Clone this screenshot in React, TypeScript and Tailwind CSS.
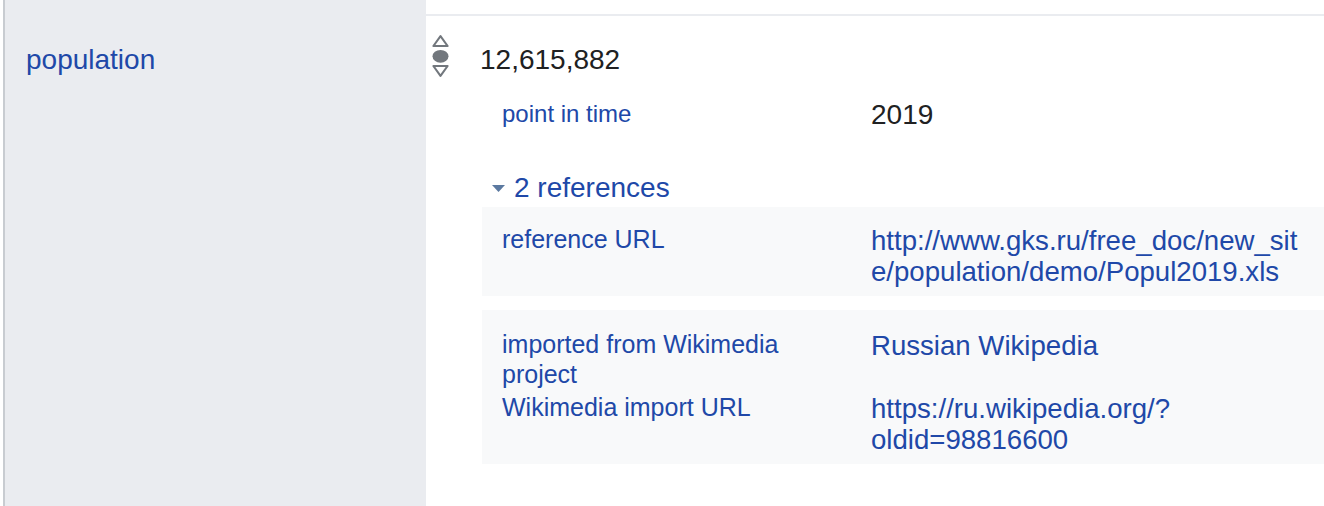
import React from "react";

const LINK = "text-[#2048a8]";

function RankIcon() {
  return (
    <svg width="17" height="42" viewBox="0 0 17 42" className="block">
      <polygon points="8.5,1.2 15.6,11 1.4,11" fill="none" stroke="#72777d" strokeWidth="2.1" strokeLinejoin="round" />
      <ellipse cx="8.5" cy="21.3" rx="8" ry="6.4" fill="#72777d" />
      <polygon points="1.4,31 15.6,31 8.5,40.8" fill="none" stroke="#72777d" strokeWidth="2.1" strokeLinejoin="round" />
    </svg>
  );
}

function Caret() {
  return (
    <svg width="13" height="7" viewBox="0 0 13 7" className="block">
      <polygon points="0,0 13,0 6.5,7" fill="#5b79a0" />
    </svg>
  );
}

export default function App() {
  return (
    <div
      className="flex w-[1324px] h-[506px] bg-white overflow-hidden"
      style={{ fontFamily: '"Liberation Sans", Arial, sans-serif' }}
    >
      {/* left property column */}
      <div className="ml-[3px] w-[423px] shrink-0 border-l-2 border-[#c8ccd1] bg-[#eaecf0] pl-[21px] pt-[44px]">
        <a className={`${LINK} text-[28px] leading-[32px]`}>population</a>
      </div>

      {/* right statement column */}
      <div className="flex-1 flex flex-col">
        <div className="mt-[14px] border-t-2 border-[#eaecf0]" />
        <div className="flex">
          <div className="w-[54px] shrink-0 pl-[6px] pt-[19px]">
            <RankIcon />
          </div>
          <div className="flex-1 flex flex-col">
            <div className="pt-[28px] text-[28px] leading-[32px] text-[#202122]">12,615,882</div>

            {/* qualifier */}
            <div className="mt-[22px] ml-[22px] flex">
              <div className={`w-[369px] shrink-0 text-[24px] leading-[30px] pt-[1px] ${LINK}`}>point in time</div>
              <div className="text-[28px] leading-[32px] pt-[1px] text-[#202122]">2019</div>
            </div>

            {/* references toggle */}
            <div className="mt-[41px] ml-[12px] flex items-center gap-[9px]">
              <Caret />
              <span className={`text-[28px] leading-[32px] ${LINK}`}>2 references</span>
            </div>

            {/* reference 1 */}
            <div className="mt-[3px] ml-[2px] bg-[#f8f9fa] pl-[20px] pr-[11px] pt-[17px] pb-[9px]">
              <div className="flex">
                <div className={`w-[369px] shrink-0 text-[25px] leading-[30px] ${LINK}`}>reference URL</div>
                <div className={`flex-1 text-[27.6px] leading-[31px] pt-[1px] break-all ${LINK}`}>
                  http://www.gks.ru/free_doc/new_site/population/demo/Popul2019.xls
                </div>
              </div>
            </div>

            {/* reference 2 */}
            <div className="mt-[14px] ml-[2px] bg-[#f8f9fa] pl-[20px] pr-[11px] pt-[19px] pb-[9px] flex flex-col gap-[3px]">
              <div className="flex">
                <div className={`w-[369px] shrink-0 pr-[60px] text-[25px] leading-[30px] ${LINK}`}>
                  imported from Wikimedia project
                </div>
                <div className={`flex-1 text-[27.6px] leading-[31px] pt-[1px] ${LINK}`}>Russian Wikipedia</div>
              </div>
              <div className="flex">
                <div className={`w-[369px] shrink-0 text-[25px] leading-[30px] ${LINK}`}>Wikimedia import URL</div>
                <div className={`flex-1 text-[27.6px] leading-[31px] pt-[1px] ${LINK}`}>
                  https://ru.wikipedia.org/?
                  <br />
                  oldid=98816600
                </div>
              </div>
            </div>
          </div>
        </div>
      </div>
    </div>
  );
}
